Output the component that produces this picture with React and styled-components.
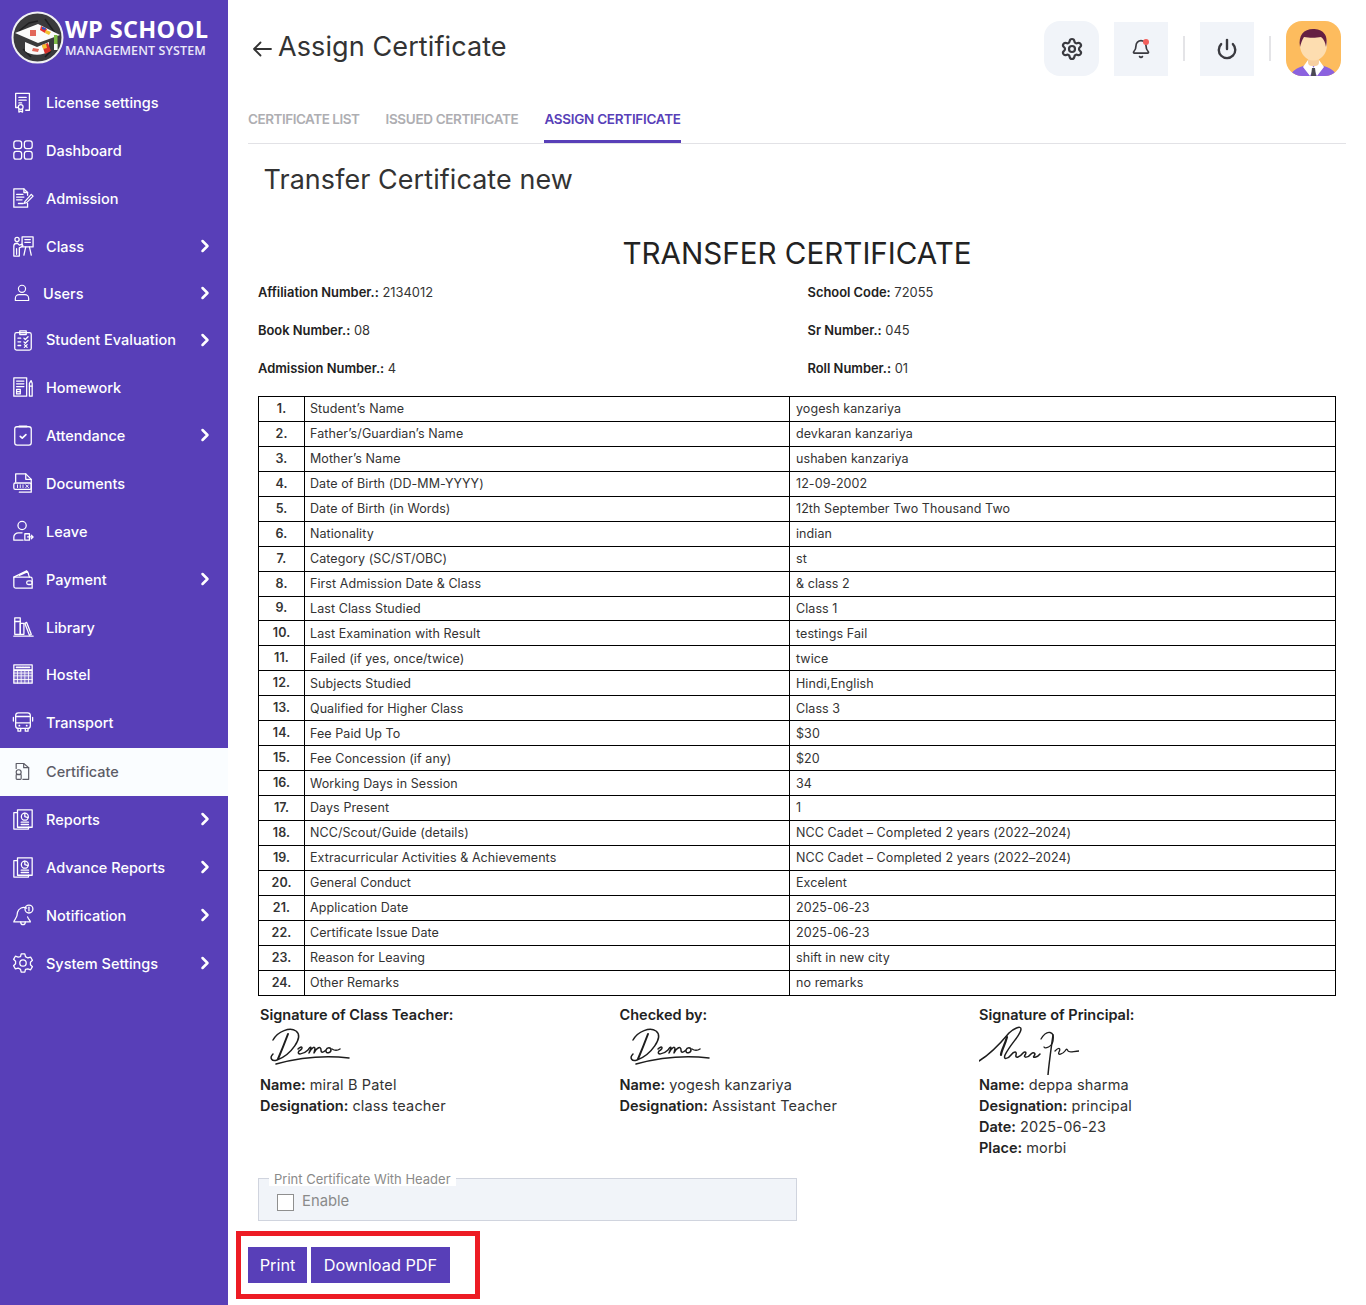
import React from "react";
import styled, { createGlobalStyle } from "styled-components";
import { Settings, Bell, Power, ChevronRight } from "lucide-react";

const FONT = `Inter, "Open Sans", "Liberation Sans", sans-serif`;
const PURPLE = "#583FB8";

const Global = createGlobalStyle`
  * { box-sizing: border-box; }
  html, body { margin: 0; padding: 0; background: #fff; }
  body { font-family: ${FONT}; color: #333; }
`;

const Page = styled.div`
  display: flex;
  min-height: 1305px;
  width: 1366px;
`;
const Sidebar = styled.aside`
  flex: 0 0 228px;
  background: ${PURPLE};
  color: #fff;
`;
const Brand = styled.div`
  display: flex;
  align-items: center;
  height: 79px;
  padding: 0 0 5px 11px;
  gap: 1px;
`;
const BrandText = styled.div`
  display: flex;
  flex-direction: column;
  font-family: "Open Sans", sans-serif;
`;
const BrandName = styled.span`
  font-size: 23.5px;
  font-weight: 700;
  line-height: 26px;
  letter-spacing: 0.35px;
`;
const BrandSub = styled.span`
  margin-top: 2px;
  font-size: 12.5px;
  font-weight: 600;
  line-height: 14px;
  letter-spacing: 0.1px;
  color: #ebe8f8;
`;
const NavItem = styled.div`
  display: flex;
  align-items: center;
  height: ${(p) => p.$h || 48}px;
  padding: 0 13px ${(p) => p.$lift || 2}px 12px;
  background: ${(p) => (p.$active ? "#FAFDFF" : "transparent")};
  color: ${(p) => (p.$active ? "#5c5c66" : "#fff")};
`;
const NavIcon = styled.span`
  flex: 0 0 ${(p) => p.$w || 34}px;
  display: flex;
  align-items: center;
  svg { display: block; }
`;
const NavLabel = styled.span`
  flex: 1;
  font-size: 14.5px;
  font-weight: 500;
  letter-spacing: 0;
  white-space: nowrap;
`;
const Chevron = styled(ChevronRight)`
  flex: none;
`;

const Main = styled.main`
  flex: 1;
  min-width: 0;
  padding: 0 20px;
`;
const TopBar = styled.header`
  display: flex;
  align-items: center;
  justify-content: space-between;
  height: 76px;
  padding: 21px 5px 0 4px;
`;
const TitleWrap = styled.div`
  display: flex;
  align-items: center;
  gap: 6px;
  margin-top: -4px;
`;
const PageTitle = styled.h1`
  margin: 0;
  font-size: 27px;
  font-weight: 400;
  line-height: 36px;
  color: #333;
  letter-spacing: 0.1px;
`;
const Actions = styled.div`
  display: flex;
  align-items: center;
`;
const ActionButton = styled.div`
  position: relative;
  display: flex;
  align-items: center;
  justify-content: center;
  width: ${(p) => p.$w || 54}px;
  height: ${(p) => p.$w || 54}px;
  margin-right: ${(p) => p.$gap || 0}px;
  background: #F1F4F9;
  border-radius: ${(p) => p.$r || 0}px;
  color: #3a3a40;
`;
const Dot = styled.span`
  position: absolute;
  top: 17px;
  left: 29px;
  width: 6px;
  height: 6px;
  border-radius: 50%;
  background: #F25F5C;
`;
const Sep = styled.span`
  width: 2px;
  height: 25px;
  margin: 0 15px;
  background: #e4e4e7;
`;
const Tabs = styled.nav`
  display: flex;
  gap: 26px;
  height: 68px;
  padding-top: 24px;
  border-bottom: 1px solid #e2e2e6;
`;
const Tab = styled.span`
  height: 43px;
  line-height: 38px;
  font-size: 13.5px;
  font-weight: 600;
  letter-spacing: ${(p) => p.$ls}px;
  white-space: nowrap;
  color: ${(p) => (p.$active ? PURPLE : "#aeaeb2")};
  border-bottom: 3px solid ${(p) => (p.$active ? PURPLE : "transparent")};
`;
const SectionTitle = styled.h2`
  margin: 16px 0 0 15.500px;
  font-size: 26.900px;
  line-height: 38px;
  font-weight: 400;
  color: #333;
  letter-spacing: 0.1px;
`;
const Certificate = styled.section`
  margin-left: 10px;
  width: 1078px;
`;
const CertHeading = styled.h3`
  margin: 35px 0 0;
  text-align: center;
  font-size: 29.600px;
  line-height: 40px;
  font-weight: 400;
  color: #222;
`;
const InfoGrid = styled.div`
  display: grid;
  grid-template-columns: 549.5px 1fr;
  grid-auto-rows: 38px;
  align-items: center;
`;
const InfoCell = styled.div`
  font-size: 12.900px;
  color: #333;
`;
const Strong = styled.b`
  font-weight: 600;
  color: #222;
`;
const Table = styled.table`
  margin-top: 9px;
  width: 1078px;
  border-collapse: collapse;
  table-layout: fixed;
  font-size: 12.5px;
  letter-spacing: 0.08px;
  color: #333;
  td {
    height: 24.95px;
    padding: 1px 6px 0;
    border: 1px solid #000;
    white-space: nowrap;
    line-height: 16px;
  }
  td:first-child {
    width: 46px;
    text-align: center;
    font-weight: 600;
    padding: 0;
  }
  td:nth-child(2) { width: 485px; padding-left: 5px; }
`;
const Signatures = styled.div`
  display: grid;
  grid-template-columns: repeat(3, 359.5px);
  padding: 8px 0 0 2px;
`;
const SignColumn = styled.div`
  font-size: 14.5px;
  line-height: 21px;
  color: #333;
`;
const SignValue = styled.span`
  letter-spacing: 0.15px;
`;
const SignImage = styled.div`
  height: 49.500px;
  svg { display: block; }
`;
const Field = styled.fieldset`
  margin: 13.500px 0 0;
  width: 539px;
  height: 49px;
  padding: 0 0 0 18px;
  background: #F1F4F9;
  border: 1px solid #d0d4de;
`;
const Legend = styled.legend`
  margin-left: -8px;
  padding: 0 5px;
  background: #fff;
  font-size: 13px;
  line-height: 14px;
  color: #8a8a8a;
  height: 14px;
`;
const CheckRow = styled.label`
  display: flex;
  align-items: center;
  gap: 8px;
  font-size: 14.800px;
  color: #8a8a8a;
  margin-top: 8px;
`;
const CheckText = styled.span`
  margin-top: -3px;
`;
const Check = styled.span`
  width: 17px;
  height: 17px;
  background: #fff;
  border: 1px solid #8f8f8f;
`;
const Highlight = styled.div`
  display: inline-flex;
  gap: 4px;
  margin: 10px 0 0 -12px;
  padding: 11px 25px 11px 7px;
  border: 5px solid #ED1C24;
`;
const Button = styled.button`
  width: ${(p) => p.$w}px;
  height: 36px;
  padding: 0;
  border: 0;
  background: ${PURPLE};
  color: #fff;
  font-family: ${FONT};
  font-size: 16.300px;
  font-weight: 400;
`;

const S = { fill: "none", stroke: "currentColor", strokeWidth: 1.4, strokeLinecap: "round", strokeLinejoin: "round" };
const Ico = ({ children, size = 22 }) => (
  <svg width={size} height={size} viewBox="0 0 24 24" {...S}>{children}</svg>
);

const BackArrow = styled.svg`
  margin-top: 4px;
`;

const icons = {
  license: <Ico><path d="M6 18H4V2.5h15V21h-4" /><path d="M7.5 7h8M7.5 10h8M7.5 13h3" /><circle cx="9.5" cy="17.5" r="2.6" /><path d="M7.5 20v3l2-1 2 1v-3" /></Ico>,
  dashboard: <Ico><rect x="2" y="2" width="8.5" height="8.5" rx="2.5" /><rect x="13.5" y="2" width="8.5" height="8.5" rx="2.5" /><rect x="2" y="13.5" width="8.5" height="8.5" rx="2.5" /><rect x="13.5" y="13.5" width="8.5" height="8.5" rx="2.5" /></Ico>,
  admission: <Ico><path d="M17 9V6l-4-4H2v20h15v-4" /><path d="M13 2v4h4" /><path d="M5 8h7M5 11h8M5 14h6M7 18h5" /><path d="M14 16l7-8 2 2-7 7-3 1z" /></Ico>,
  class: <Ico><rect x="11" y="2" width="12" height="11" /><path d="M14 5h6M14 8h6" /><circle cx="5.5" cy="5" r="2.3" /><path d="M2 21v-9c0-2 2-3 4-3l2 2 3-1 1 2-4 2v9H2z" /><path d="M5 15v6M15 13l-2 9M19 13l2 9" /></Ico>,
  users: <Ico size={20}><circle cx="12" cy="7" r="4.3" /><path d="M4 21v-2.5c0-2.5 2-4.5 4.5-4.5h7c2.500 0 4.500 2 4.500 4.500V21z" /></Ico>,
  evaluation: <Ico><rect x="3" y="4" width="18" height="19" rx="2" /><path d="M8.500 2h7v4h-7z" /><path d="M6.500 10h3M6.500 14h3M6.500 18h3M13 10l1.500 1.500 3-3M13 14l1.500 1.500 3-3M13.500 17l3 3M16.500 17l-3 3" /></Ico>,
  homework: <Ico><rect x="2" y="2" width="14" height="20" /><path d="M5 5.500h8M5 8.500h8M5 11.500h8" /><rect x="5" y="14.500" width="4" height="5" /><path d="M5 17h4" /><path d="M19 8l1.800-3 1.200 3v14h-3z" /><path d="M19 11h3" /></Ico>,
  attendance: <Ico><rect x="3" y="3" width="18" height="20" rx="2.500" /><path d="M8 2.500h8" strokeWidth="2" /><path d="M9 13.500l2.200 2 4-4" strokeWidth="1.800" /></Ico>,
  documents: <Ico><path d="M4 11V2h11l6 6v14H8" /><path d="M15 2v6h6" /><rect x="2" y="12" width="19" height="7" rx="1.500" /><path d="M6 14v3M9 14v3M12 14v3M15 14l3 3M18 14l-3 3" strokeWidth="1" /></Ico>,
  leave: <Ico><circle cx="11" cy="6" r="4.500" /><path d="M11 14H7c-2.500 0-5 2-5 4.500V22h10" /><rect x="14" y="15" width="5" height="7" /><path d="M17 18.500h6M21 16.500l2 2-2 2" /></Ico>,
  payment: <Ico><path d="M2 10h18a2 2 0 0 1 2 2v10H4a2 2 0 0 1-2-2z" /><path d="M2 10l14-7 2 3M8 8l9-4 2 6" /><rect x="16" y="14" width="6" height="4" rx="2" /></Ico>,
  library: <Ico><path d="M2 22h21" /><rect x="3" y="2" width="6" height="18" /><path d="M3 6h6" /><rect x="9" y="8" width="4" height="12" /><path d="M14 8l2-1 5 13-2 1z" /></Ico>,
  hostel: <Ico><rect x="2" y="2" width="20" height="5.500" /><path d="M5 4.800h14" strokeWidth="2" strokeDasharray="2 1" /><rect x="2" y="8" width="20" height="14" fill="currentColor" fillOpacity=".25" /><path d="M2 11h20M2 14h20M2 18h20M6 8v14M10 8v14M14 8v14M18 8v14" strokeWidth=".9" /></Ico>,
  transport: <Ico><rect x="4" y="2" width="16" height="17" rx="3" /><path d="M4 6h16M4 13h16" /><path d="M1.500 7v4M22.500 7v4" /><path d="M6.500 19v3h3v-3M14.500 19v3h3v-3" /><path d="M8 16h.1M16 16h.1" strokeWidth="2" /></Ico>,
  certificate: <Ico size={20}><path d="M5 9V3h9l6 5v14h-7" /><path d="M14 3v5h6" /><circle cx="8" cy="13.500" r="3" /><rect x="5" y="16" width="6" height="6" rx="1" /></Ico>,
  reports: <Ico><path d="M6 2h16v19H6z" /><path d="M6 5H2v18h16v-2" /><circle cx="14" cy="9.500" r="3.800" /><path d="M14 9.500V5.700M14 9.500l3.500 1" /><path d="M10 15.500h8M10 18h8" /></Ico>,
  bell: <Ico><path d="M16 4.500A7 7 0 0 0 6 9c0 7-4 8-4 10.500h18c0-1.500-2-2.500-3-5.500" /><path d="M9.500 19.500c0 2 1 3 2.500 3s2.500-1 2.500-3" /><circle cx="18.500" cy="5.500" r="4.300" /><path d="M18.500 3.500v4" /></Ico>,
  settings: <Ico><circle cx="12" cy="12" r="3.500" /><path d="M10 2h4l.7 3 2.600 1.500 3-.9 2 3.400-2.200 2.100v2.800l2.200 2.100-2 3.400-3-.9L14.700 19l-.7 3h-4l-.7-3-2.600-1.500-3 .9-2-3.400 2.200-2.100v-2.800L1.700 8l2-3.400 3 .9L9.300 5z" /></Ico>,
};

const nav = [
  ["License settings", "license"],
  ["Dashboard", "dashboard"],
  ["Admission", "admission"],
  ["Class", "class", true],
  ["Users", "users", true, { h: 46, w: 31 }],
  ["Student Evaluation", "evaluation", true, { h: 47 }],
  ["Homework", "homework"],
  ["Attendance", "attendance", true],
  ["Documents", "documents"],
  ["Leave", "leave"],
  ["Payment", "payment", true],
  ["Library", "library"],
  ["Hostel", "hostel", false, { lift: 4 }],
  ["Transport", "transport", false, { lift: 4 }],
  ["Certificate", "certificate", false, { active: true }],
  ["Reports", "reports", true],
  ["Advance Reports", "reports", true],
  ["Notification", "bell", true],
  ["System Settings", "settings", true],
];

const rows = [
  ["Student’s Name", "yogesh kanzariya"],
  ["Father’s/Guardian’s Name", "devkaran kanzariya"],
  ["Mother’s Name", "ushaben kanzariya"],
  ["Date of Birth (DD-MM-YYYY)", "12-09-2002"],
  ["Date of Birth (in Words)", "12th September Two Thousand Two"],
  ["Nationality", "indian"],
  ["Category (SC/ST/OBC)", "st"],
  ["First Admission Date & Class", "& class 2"],
  ["Last Class Studied", "Class 1"],
  ["Last Examination with Result", "testings Fail"],
  ["Failed (if yes, once/twice)", "twice"],
  ["Subjects Studied", "Hindi,English"],
  ["Qualified for Higher Class", "Class 3"],
  ["Fee Paid Up To", "$30"],
  ["Fee Concession (if any)", "$20"],
  ["Working Days in Session", "34"],
  ["Days Present", "1"],
  ["NCC/Scout/Guide (details)", "NCC Cadet – Completed 2 years (2022–2024)"],
  ["Extracurricular Activities & Achievements", "NCC Cadet – Completed 2 years (2022–2024)"],
  ["General Conduct", "Excelent"],
  ["Application Date", "2025-06-23"],
  ["Certificate Issue Date", "2025-06-23"],
  ["Reason for Leaving", "shift in new city"],
  ["Other Remarks", "no remarks"],
];

const Logo = () => (
  <svg width="53" height="53" viewBox="0 0 53 53">
    <circle cx="26.500" cy="26.500" r="25" fill="#3a3a3c" stroke="#f1f1f4" strokeWidth="2" />
    <path d="M8 20l10-8 9-2M34 8l10 14M12 38l8 8M40 40l-6 6" stroke="#1e1e20" strokeWidth="1.500" fill="none" />
    <path d="M14 31l12 5 12-5v9c-6 5-18 5-24 0z" fill="#fafafa" />
    <path d="M4 22l23-9 22 11-22 8z" fill="#fbfbfb" />
    <rect x="19" y="19" width="6" height="6" fill="#e2675a" />
    <path d="M30 15l6 3-2 4-5-3z" fill="#e5322d" />
    <path d="M35 19l5 2-2 3-4-2z" fill="#f2c230" />
    <path d="M31 16l4 1-1 2-3-1z" fill="#2a58c8" />
    <path d="M22 37l6 1-1 3-6-1z" fill="#e2675a" />
    <path d="M31 34l6-2 3 8-6 3z" fill="#d8302b" />
    <path d="M31 34l4-1 1 4-4 1z" fill="#f2c230" />
    <rect x="43" y="24" width="3.500" height="15" fill="#7dbb45" />
    <rect x="43" y="33" width="3.500" height="6" fill="#fafafa" />
  </svg>
);

const Avatar = () => (
  <svg width="55" height="55" viewBox="0 0 55 55">
    <defs><clipPath id="av"><rect width="55" height="55" rx="16" /></clipPath></defs>
    <g clipPath="url(#av)">
      <rect width="55" height="55" fill="#FDBC5E" />
      <path d="M5 55c1-7 9-9 18-12h9c9 3 17 5 18 12z" fill="#8B62DF" />
      <path d="M17 46l5-7 6 8-4 8zM38 46l-5-7-6 8 4 8z" fill="#fff" />
      <path d="M26 47h3l1 8h-5z" fill="#4a4a52" />
      <rect x="22" y="34" width="11" height="11" rx="4" fill="#F7CFA0" />
      <ellipse cx="27.500" cy="24" rx="13.500" ry="15.500" fill="#FDDDB0" />
      <path d="M14 26c-2-12 4-18 13-18s16 5 13 18c-1-5-2-8-5-10-5 1-12 1-17 0-2 3-3 6-4 10z" fill="#651F42" />
    </g>
  </svg>
);

const SigDemo = () => (
  <svg width="100" height="44" viewBox="0 0 100 44" fill="none" stroke="#1d1d1d" strokeWidth="1.500" strokeLinecap="round" strokeLinejoin="round">
    <path d="M13 15C18 6 30 2 36 6c8 6-5 24-19 29-5 2-8-2-4-6" strokeWidth="1.500" />
    <path d="M28 9c-3 8-7 18-10 25" strokeWidth="2" />
    <path d="M38 24c4-4 6-1 1 2-3 4 4 4 9-1 1-2 3-4 3-2l-2 5c3-6 6-7 6-4l-1 4c3-6 7-7 7-3 0 3 2 3 5 0 1-3 5-3 5 0s-5 4-5 1" />
    <path d="M72 24c3 2 5 2 8 0" />
    <path d="M16 39c22-6 48-9 73-6" strokeWidth="1.500" />
  </svg>
);

const SigPrincipal = () => (
  <svg width="100" height="50" viewBox="10 4 100 50" fill="none" stroke="#1d1d1d" strokeWidth="1.300" strokeLinecap="round" strokeLinejoin="round">
    <path d="M10 40c10-6 20-16 30-28 4-4 12-8 12-4 0 6-10 14-16 26-2 5 3 4 6 0 3-4 6-4 5 0s4 2 7-2c2-2 4-1 2 2s3 3 6-1c3-3 5 0 3 2s3 2 6-2" strokeWidth="1.500" />
    <path d="M38 16c-2 8-6 14-6 18" strokeWidth="2.200" />
    <path d="M72 18c6-10 14-8 12 2-1 6-8 8-9 6" />
    <path d="M84 14c-2 14-4 28-5 40" strokeWidth="1.500" />
    <path d="M86 30c4-4 6-3 4 1s4 2 6-1 2-2 3 0 6 0 12 0" />
  </svg>
);

const Signature = ({ title, sig, lines }) => (
  <SignColumn>
    <Strong>{title}</Strong>
    <SignImage>{sig}</SignImage>
    {lines.map(([k, v]) => (
      <div key={k}><Strong>{k}</Strong> <SignValue>{v}</SignValue></div>
    ))}
  </SignColumn>
);

export default function App() {
  return (
    <Page>
      <Global />
      <Sidebar>
        <Brand>
          <Logo />
          <BrandText>
            <BrandName>WP SCHOOL</BrandName>
            <BrandSub>MANAGEMENT SYSTEM</BrandSub>
          </BrandText>
        </Brand>
        {nav.map(([label, icon, more, o = {}]) => (
          <NavItem key={label} $h={o.h} $active={o.active} $lift={o.lift}>
            <NavIcon $w={o.w}>{icons[icon]}</NavIcon>
            <NavLabel>{label}</NavLabel>
            {more && <Chevron size={20} strokeWidth={3} />}
          </NavItem>
        ))}
      </Sidebar>
      <Main>
        <TopBar>
          <TitleWrap>
            <BackArrow width="20" height="20" viewBox="0 0 20 20" fill="none" stroke="#333" strokeWidth="1.800" strokeLinecap="round" strokeLinejoin="round">
              <path d="M19 10H2M8.500 3.500L2 10l6.500 6.500" />
            </BackArrow>
            <PageTitle>Assign Certificate</PageTitle>
          </TitleWrap>
          <Actions>
            <ActionButton $w={55} $r={16} $gap={15}><Settings size={24} strokeWidth={2.200} /></ActionButton>
            <ActionButton><Bell size={20} strokeWidth={2} /><Dot /></ActionButton>
            <Sep />
            <ActionButton><Power size={22} strokeWidth={2.600} /></ActionButton>
            <Sep />
            <Avatar />
          </Actions>
        </TopBar>
        <Tabs>
          <Tab $ls={-0.47}>CERTIFICATE LIST</Tab>
          <Tab $ls={-0.35}>ISSUED CERTIFICATE</Tab>
          <Tab $ls={-0.28} $active>ASSIGN CERTIFICATE</Tab>
        </Tabs>
        <SectionTitle>Transfer Certificate new</SectionTitle>
        <Certificate>
          <CertHeading>TRANSFER CERTIFICATE</CertHeading>
          <InfoGrid>
            <InfoCell><Strong>Affiliation Number.:</Strong> 2134012</InfoCell>
            <InfoCell><Strong>School Code:</Strong> 72055</InfoCell>
            <InfoCell><Strong>Book Number.:</Strong> 08</InfoCell>
            <InfoCell><Strong>Sr Number.:</Strong> 045</InfoCell>
            <InfoCell><Strong>Admission Number.:</Strong> 4</InfoCell>
            <InfoCell><Strong>Roll Number.:</Strong> 01</InfoCell>
          </InfoGrid>
          <Table>
            <tbody>
              {rows.map(([a, b], i) => (
                <tr key={a}><td>{i + 1}.</td><td>{a}</td><td>{b}</td></tr>
              ))}
            </tbody>
          </Table>
          <Signatures>
            <Signature title="Signature of Class Teacher:" sig={<SigDemo />} lines={[["Name:", "miral B Patel"], ["Designation:", "class teacher"]]} />
            <Signature title="Checked by:" sig={<SigDemo />} lines={[["Name:", "yogesh kanzariya"], ["Designation:", "Assistant Teacher"]]} />
            <Signature title="Signature of Principal:" sig={<SigPrincipal />} lines={[["Name:", "deppa sharma"], ["Designation:", "principal"], ["Date:", "2025-06-23"], ["Place:", "morbi"]]} />
          </Signatures>
          <Field>
            <Legend>Print Certificate With Header</Legend>
            <CheckRow><Check /><CheckText>Enable</CheckText></CheckRow>
          </Field>
        </Certificate>
        <Highlight>
          <Button $w={59}>Print</Button>
          <Button $w={139}>Download PDF</Button>
        </Highlight>
      </Main>
    </Page>
  );
}
